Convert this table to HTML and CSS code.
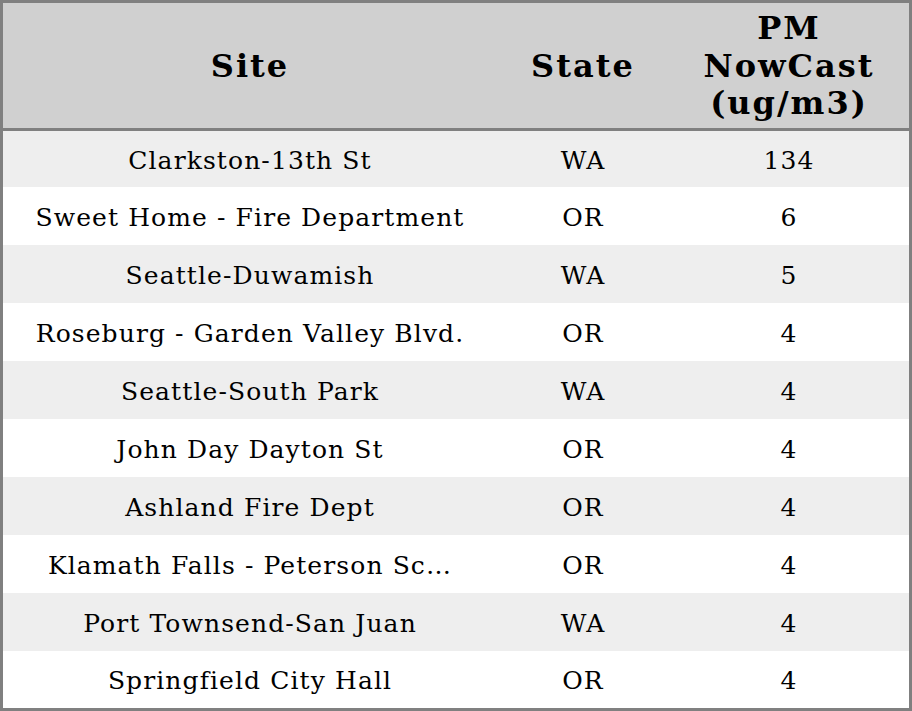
FILE: index.html
```html
<!DOCTYPE html>
<html>
<head>
<meta charset="utf-8">
<link rel="stylesheet" href="styles.css">
</head>
<body>
<table class="aq">
  <colgroup>
    <col class="c-site">
    <col class="c-state">
    <col class="c-pm">
  </colgroup>
  <thead>
    <tr><th>Site</th><th>State</th><th>PM<br>NowCast<br>(ug/m3)</th></tr>
  </thead>
  <tbody>
    <tr class="first"><td>Clarkston-13th St</td><td>WA</td><td>134</td></tr>
    <tr><td>Sweet Home - Fire Department</td><td>OR</td><td>6</td></tr>
    <tr><td>Seattle-Duwamish</td><td>WA</td><td>5</td></tr>
    <tr><td>Roseburg - Garden Valley Blvd.</td><td>OR</td><td>4</td></tr>
    <tr><td>Seattle-South Park</td><td>WA</td><td>4</td></tr>
    <tr><td>John Day Dayton St</td><td>OR</td><td>4</td></tr>
    <tr><td>Ashland Fire Dept</td><td>OR</td><td>4</td></tr>
    <tr><td>Klamath Falls - Peterson Sc…</td><td>OR</td><td>4</td></tr>
    <tr><td>Port Townsend-San Juan</td><td>WA</td><td>4</td></tr>
    <tr class="last"><td>Springfield City Hall</td><td>OR</td><td>4</td></tr>
  </tbody>
</table>
</body>
</html>
```
FILE: styles.css
```css
html, body {
  margin: 0;
  padding: 0;
  background: #ffffff;
}
.aq {
  width: 912px;
  border-collapse: separate;
  border-spacing: 0;
  border: 3px solid #808080;
  table-layout: fixed;
  font-family: "DejaVu Serif", serif;
  color: #000;
}
.c-site { width: 494px; }
.c-state { width: 172px; }
.c-pm { width: 240px; }
.aq th {
  background: #d0d0d0;
  font-size: 32px;
  letter-spacing: 2px;
  font-weight: bold;
  height: 123px;
  padding: 2px 0 0 0;
  text-align: center;
  vertical-align: middle;
  border-bottom: 3px solid #808080;
  line-height: 37.5px;
}
.aq td {
  font-size: 25px;
  letter-spacing: 1.1px;
  height: 56px;
  padding: 2px 0 0 0;
  line-height: 29px;
  text-align: center;
  vertical-align: middle;
  white-space: nowrap;
}
.aq tbody tr:nth-child(odd) td {
  background: #eeeeee;
}
.aq tr.first td { height: 54px; }
.aq tr.last td { height: 55px; }
```
